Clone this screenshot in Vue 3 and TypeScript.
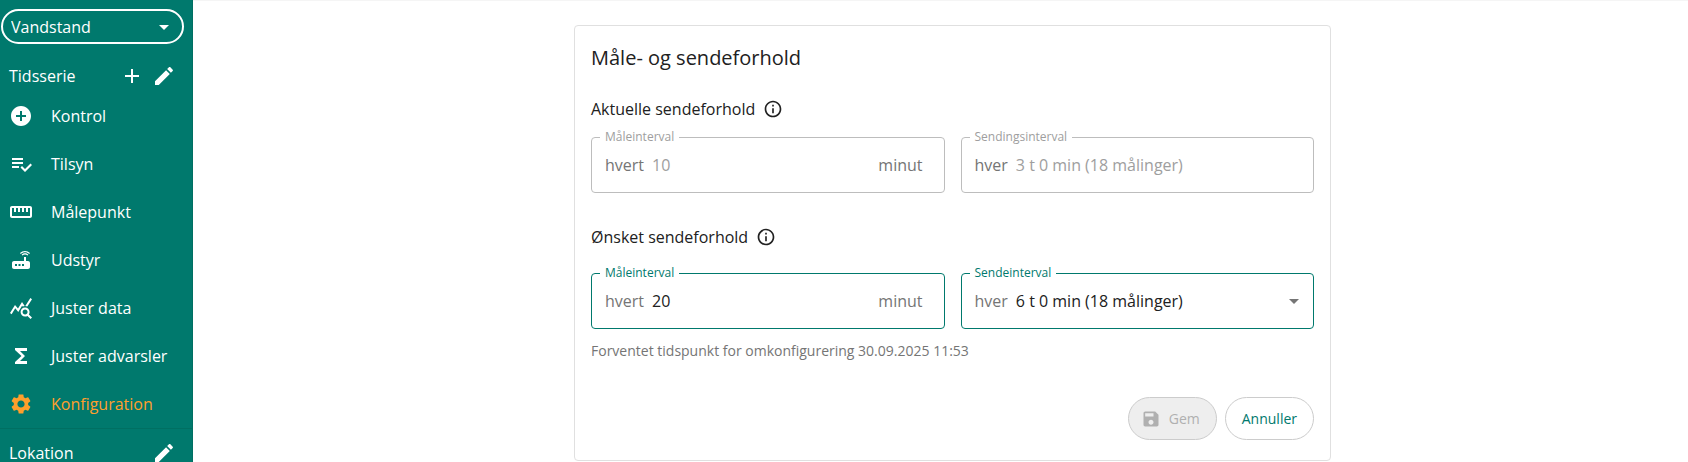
<script setup lang="ts">
import { ref } from 'vue'

interface MenuItem {
  label: string
  path: string
  active?: boolean
}

const pencil =
  'M3 17.25V21h3.75L17.81 9.94l-3.75-3.75L3 17.25zM20.71 7.04c.39-.39.39-1.02 0-1.41l-2.34-2.34c-.39-.39-1.02-.39-1.41 0l-1.83 1.83 3.75 3.75 1.83-1.83z'
const info =
  'M11 7h2v2h-2zm0 4h2v6h-2zm1-9C6.48 2 2 6.48 2 12s4.48 10 10 10 10-4.48 10-10S17.52 2 12 2zm0 18c-4.41 0-8-3.59-8-8s3.59-8 8-8 8 3.59 8 8-3.59 8-8 8z'

const items: MenuItem[] = [
  {
    label: 'Kontrol',
    path: 'M12 2C6.48 2 2 6.48 2 12s4.48 10 10 10 10-4.48 10-10S17.52 2 12 2zm5 11h-4v4h-2v-4H7v-2h4V7h2v4h4v2z',
  },
  {
    label: 'Tilsyn',
    path: 'M14 10H3v2h11v-2zm0-4H3v2h11V6zM3 16h7v-2H3v2zm18.5-4.5L23 13l-6.99 7-4.51-4.5L13 14l3.01 3 5.49-5.5z',
  },
  {
    label: 'Målepunkt',
    path: 'M21 6H3c-1.1 0-2 .9-2 2v8c0 1.1.9 2 2 2h18c1.1 0 2-.9 2-2V8c0-1.1-.9-2-2-2zm0 10H3V8h2v4h2V8h2v4h2V8h2v4h2V8h2v4h2V8h2v8z',
  },
  {
    label: 'Udstyr',
    path: 'm20.2 5.9.8-.8C19.6 3.7 17.8 3 16 3s-3.6.7-5 2.1l.8.8C13 4.8 14.5 4.2 16 4.2s3 .6 4.2 1.7zm-.9.8c-.9-.9-2.1-1.4-3.3-1.4s-2.4.5-3.3 1.4l.8.8c.7-.7 1.6-1 2.5-1s1.8.3 2.5 1l.8-.8zM19 13h-2V9h-2v4H5c-1.1 0-2 .9-2 2v4c0 1.1.9 2 2 2h14c1.1 0 2-.9 2-2v-4c0-1.1-.9-2-2-2zM8 18H6v-2h2v2zm3.5 0h-2v-2h2v2zm3.5 0h-2v-2h2v2z',
  },
  {
    label: 'Juster data',
    path: 'M19.88 18.47c.44-.7.7-1.51.7-2.39 0-2.49-2.01-4.5-4.5-4.5s-4.5 2.01-4.5 4.5 2.01 4.5 4.49 4.5c.88 0 1.7-.26 2.39-.7L21.58 23 23 21.58l-3.12-3.11zm-3.8.11c-1.38 0-2.5-1.12-2.5-2.5s1.12-2.5 2.5-2.5 2.5 1.12 2.5 2.5-1.12 2.5-2.5 2.5zm-.36-8.5c-.74.02-1.45.18-2.1.45l-.55-.83-3.8 6.18-3.01-3.52-3.63 5.81L1 17l5-8 3 3.5L13 6l2.72 4.08zm2.59.5c-.64-.28-1.33-.45-2.05-.49L21.38 2 23 3.18l-4.69 7.4z',
  },
  { label: 'Juster advarsler', path: 'M18 4H6v2l6.5 6L6 18v2h12v-3h-7l5-5-5-5h7z' },
  {
    label: 'Konfiguration',
    active: true,
    path: 'M19.14 12.94c.04-.3.06-.61.06-.94 0-.32-.02-.64-.07-.94l2.03-1.58c.18-.14.23-.41.12-.61l-1.92-3.32c-.12-.22-.37-.29-.59-.22l-2.39.96c-.5-.38-1.03-.7-1.62-.94l-.36-2.54c-.04-.24-.24-.41-.48-.41h-3.84c-.24 0-.43.17-.47.41l-.36 2.54c-.59.24-1.13.57-1.62.94l-2.39-.96c-.22-.08-.47 0-.59.22L2.74 8.87c-.12.21-.08.47.12.61l2.03 1.58c-.05.3-.09.63-.09.94s.02.64.07.94l-2.03 1.58c-.18.14-.23.41-.12.61l1.92 3.32c.12.22.37.29.59.22l2.39-.96c.5.38 1.03.7 1.62.94l.36 2.54c.05.24.24.41.48.41h3.84c.24 0 .44-.17.47-.41l.36-2.54c.59-.24 1.13-.56 1.62-.94l2.39.96c.22.08.47 0 .59-.22l1.92-3.32c.12-.22.07-.47-.12-.61l-2.01-1.58zM12 15.6c-1.98 0-3.6-1.62-3.6-3.6s1.62-3.6 3.6-3.6 3.6 1.62 3.6 3.6-1.62 3.6-3.6 3.6z',
  },
]

const series = ref('Vandstand')
const currentMeasure = ref('10')
const currentSend = ref('3 t 0 min (18 målinger)')
const wantedMeasure = ref('20')
const wantedSend = ref('6 t 0 min (18 målinger)')
</script>

<template>
  <div class="page">
    <aside class="sidebar">
      <div class="series">
        <select v-model="series" aria-label="Tidsserie">
          <option>Vandstand</option>
        </select>
        <svg class="caret" viewBox="0 0 24 24" aria-hidden="true"><path d="m7 10 5 5 5-5z" /></svg>
      </div>
      <div class="heading">
        <span class="heading-text">Tidsserie</span>
        <button type="button" class="icon-button" aria-label="Tilføj tidsserie">
          <svg viewBox="0 0 24 24"><path d="M19 13h-6v6h-2v-6H5v-2h6V5h2v6h6v2z" /></svg>
        </button>
        <button type="button" class="icon-button" aria-label="Rediger tidsserie">
          <svg viewBox="0 0 24 24"><path :d="pencil" /></svg>
        </button>
      </div>
      <nav>
        <a v-for="item in items" :key="item.label" href="#" class="item" :class="{ active: item.active }">
          <svg viewBox="0 0 24 24" aria-hidden="true"><path :d="item.path" /></svg>
          <span>{{ item.label }}</span>
        </a>
      </nav>
      <div class="heading location">
        <span class="heading-text">Lokation</span>
        <button type="button" class="icon-button" aria-label="Rediger lokation">
          <svg viewBox="0 0 24 24"><path :d="pencil" /></svg>
        </button>
      </div>
    </aside>

    <main class="main">
      <form class="card" @submit.prevent>
        <h1>Måle- og sendeforhold</h1>

        <h2>
          Aktuelle sendeforhold
          <svg viewBox="0 0 24 24" aria-hidden="true"><path :d="info" /></svg>
        </h2>
        <div class="fields">
          <fieldset class="field">
            <legend><label for="current-measure">Måleinterval</label></legend>
            <div class="control">
              <span class="affix">hvert</span>
              <input id="current-measure" v-model="currentMeasure" disabled />
              <span class="affix suffix">minut</span>
            </div>
          </fieldset>
          <fieldset class="field">
            <legend><label for="current-send">Sendingsinterval</label></legend>
            <div class="control">
              <span class="affix">hver</span>
              <input id="current-send" v-model="currentSend" disabled />
            </div>
          </fieldset>
        </div>

        <h2 class="wanted">
          Ønsket sendeforhold
          <svg viewBox="0 0 24 24" aria-hidden="true"><path :d="info" /></svg>
        </h2>
        <div class="fields wanted-fields">
          <fieldset class="field editable">
            <legend><label for="wanted-measure">Måleinterval</label></legend>
            <div class="control">
              <span class="affix">hvert</span>
              <input id="wanted-measure" v-model="wantedMeasure" />
              <span class="affix suffix">minut</span>
            </div>
          </fieldset>
          <fieldset class="field editable">
            <legend><label for="wanted-send">Sendeinterval</label></legend>
            <div class="control">
              <span class="affix">hver</span>
              <select id="wanted-send" v-model="wantedSend">
                <option>6 t 0 min (18 målinger)</option>
              </select>
              <svg class="caret" viewBox="0 0 24 24" aria-hidden="true"><path d="m7 10 5 5 5-5z" /></svg>
            </div>
          </fieldset>
        </div>
        <p class="hint">Forventet tidspunkt for omkonfigurering 30.09.2025 11:53</p>

        <div class="actions">
          <button type="submit" class="action" disabled>
            <svg viewBox="0 0 24 24" aria-hidden="true">
              <path d="M17 3H5c-1.11 0-2 .9-2 2v14c0 1.1.89 2 2 2h14c1.1 0 2-.9 2-2V7l-4-4zm-5 16c-1.66 0-3-1.34-3-3s1.34-3 3-3 3 1.34 3 3-1.34 3-3 3zm3-10H5V5h10v4z" />
            </svg>
            Gem
          </button>
          <button type="button" class="action cancel">Annuller</button>
        </div>
      </form>
    </main>
  </div>
</template>

<style>
html,
body {
  margin: 0;
  height: 100%;
  overflow: hidden;
}
#app {
  height: 100%;
}
</style>

<style scoped>
.page {
  display: flex;
  height: 100%;
  overflow: hidden;
  font-family: 'Open Sans', 'Noto Sans', sans-serif;
  font-size: 16px;
  line-height: 24px;
  color: #212121;
  background: #fff;
}
svg {
  display: block;
  flex: none;
  fill: currentColor;
}
button,
input,
select {
  font: inherit;
  color: inherit;
  margin: 0;
}
.sidebar {
  flex: none;
  width: 193px;
  box-sizing: border-box;
  padding-top: 9px;
  color: #fff;
  background: #00796d;
  border-right: 1px solid #006f62;
}
.series {
  display: grid;
  align-items: center;
  margin: 0 8px 0 1px;
}
.series select {
  grid-area: 1 / 1;
  height: 35px;
  padding: 0 32px 0 8px;
  appearance: none;
  background: transparent;
  border: 2px solid #fff;
  border-radius: 18px;
}
.series .caret {
  grid-area: 1 / 1;
  justify-self: end;
  width: 24px;
  margin-right: 8px;
  pointer-events: none;
}
.heading {
  display: flex;
  align-items: center;
  gap: 8px;
  height: 48px;
  padding: 0 16px 0 9px;
}
.series + .heading {
  margin-top: 8px;
}
.heading-text {
  flex: 1;
  line-height: 16px;
}
.icon-button {
  padding: 0;
  border: 0;
  background: none;
}
.icon-button svg {
  width: 24px;
}
nav {
  margin-top: -8px;
}
.item {
  display: flex;
  align-items: center;
  gap: 18px;
  height: 48px;
  padding-left: 9px;
  color: inherit;
  text-decoration: none;
}
.item svg {
  width: 24px;
}
.item.active {
  color: #ff9f2c;
}
.location {
  border-top: 1px solid #006f62;
}
.main {
  flex: 1;
  display: flex;
  justify-content: center;
  align-items: flex-start;
  padding: 24px 0 0 24px;
  border-top: 1px solid #f5f5f5;
}
.card {
  flex: 0 1 757px;
  box-sizing: border-box;
  padding: 16px 16px 20px;
  border: 1px solid #e0e0e0;
  border-radius: 4px;
}
h1,
h2 {
  margin: 0;
  font-weight: 400;
}
h1 {
  font-size: 20px;
  line-height: 32px;
}
h2 {
  display: flex;
  align-items: center;
  gap: 8px;
  margin-top: 23px;
  font-size: 16px;
  line-height: 24px;
}
h2 svg {
  width: 20px;
}
.fields {
  display: grid;
  grid-template-columns: 1fr 1fr;
  gap: 16px;
  margin-top: 8px;
}
.wanted {
  margin-top: 32px;
}
.wanted-fields {
  margin-top: 16px;
}
.field {
  min-width: 0;
  margin: 0;
  padding: 0 13px;
  border: 1px solid #bdbdbd;
  border-radius: 4px;
}
.field legend {
  margin-left: -5px;
  padding: 0 5px;
  font-size: 12px;
  line-height: 16px;
  color: #9e9e9e;
}
.control {
  display: flex;
  align-items: center;
  gap: 8px;
  height: 40px;
  padding-bottom: 7px;
}
.control input,
.control select {
  flex: 1;
  min-width: 0;
  padding: 0;
  appearance: none;
  border: 0;
  outline: 0;
  background: transparent;
}
.control input:disabled {
  color: #9e9e9e;
}
.affix {
  color: #757575;
}
.suffix {
  padding-right: 8px;
}
.control .caret {
  width: 24px;
  margin-right: -6px;
  color: #757575;
}
.editable {
  border-color: #00796d;
}
.editable legend {
  color: #00796d;
}
.hint {
  margin: 12px 0 0;
  font-size: 14px;
  line-height: 20px;
  color: #757575;
}
.actions {
  display: flex;
  justify-content: flex-end;
  gap: 8px;
  margin-top: 36px;
}
.action {
  display: flex;
  align-items: center;
  gap: 8px;
  height: 43px;
  padding: 0 16px;
  font-size: 14px;
  border: 1px solid #ccc;
  border-radius: 22px;
  background: #fff;
}
.action:disabled {
  padding-left: 12px;
  color: #b0b0b0;
  background: #eee;
}
.action svg {
  width: 20px;
}
.cancel {
  color: #00796d;
}
</style>
